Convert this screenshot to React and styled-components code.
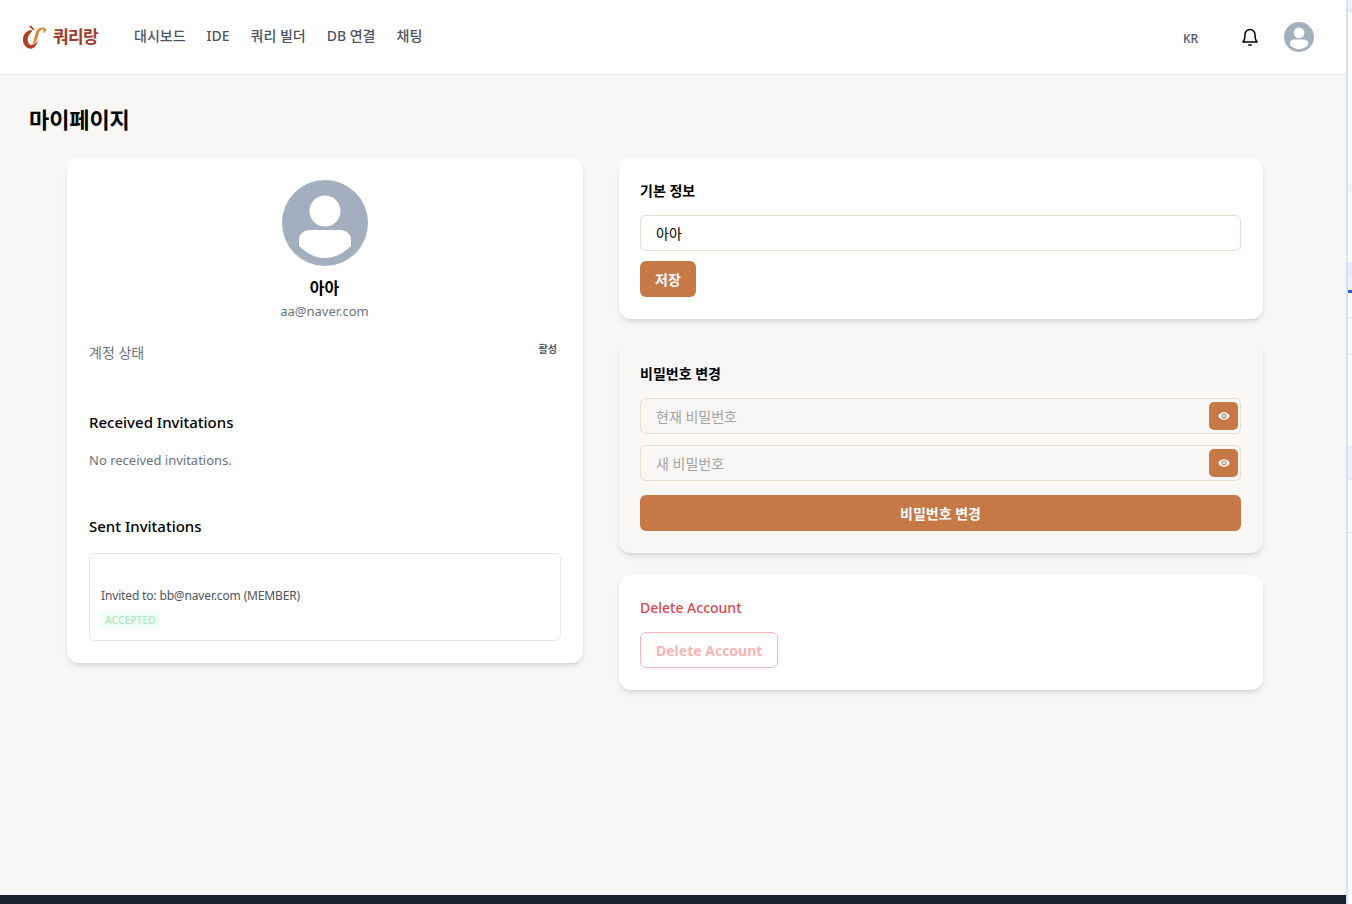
import React from "react";
import styled, { createGlobalStyle } from "styled-components";

const Global = createGlobalStyle`
  html, body { margin: 0; padding: 0; height: 100%; overflow: hidden; background: #fff; }
  body { font-family: "Noto Sans", "Noto Sans CJK KR", sans-serif; }
  * { box-sizing: border-box; }
`;

const Shell = styled.div`display: flex; width: 1352px; height: 904px; overflow: hidden;`;
const Page = styled.div`width: 1346px; height: 904px; display: flex; flex-direction: column; background: #f9f7f5;`;
const Strip = styled.div`width: 6px; height: 904px; flex: none; background: #fff; border-left: 2px solid #d5dff8; display: flex; flex-direction: column;`;
const StripCell = styled.div`flex: none; height: ${p => p.$h}px; background: ${p => p.$bg || "#fff"}; border-bottom: ${p => p.$line ? `1px solid ${p.$line}` : "none"};`;

const Header = styled.header`height: 75px; flex: none; background: #fff; border-bottom: 1px solid #e5e7eb; display: flex; align-items: center; padding: 0 32px 0 22px;`;
const Brand = styled.div`display: flex; align-items: center; gap: 4px; width: 112px; flex: none;`;
const BrandName = styled.span`font-size: 17px; font-weight: 700; letter-spacing: -0.6px; color: #a33a2a; line-height: 24px;`;
const Nav = styled.nav`display: flex; gap: 21px; align-items: center; margin-top: -3px;`;
const NavLink = styled.a`font-size: 14px; font-weight: 500; color: #4b5563; line-height: 20px; white-space: nowrap;`;
const HeaderRight = styled.div`margin-left: auto; display: flex; align-items: center;`;
const Lang = styled.span`font-size: 12px; font-weight: 500; color: #4b5563; width: 57px; margin-top: 2px;`;
const BellWrap = styled.span`display: flex; width: 44px;`;

const Main = styled.main`flex: 1; min-height: 0; padding: 29px 83px 0 29px;`;
const Title = styled.h1`margin: 0 0 24px; font-size: 22px; font-weight: 700; color: #000; line-height: 30px; letter-spacing: -0.1px;`;
const Grid = styled.div`display: grid; grid-template-columns: 516px 644px; gap: 36px; margin-left: 38px; align-items: start;`;
const Column = styled.div`display: flex; flex-direction: column; gap: 22px;`;
const Card = styled.section`
  background: ${p => p.$tint ? "#f9f7f5" : "#fff"};
  border-radius: 12px;
  box-shadow: 0 4px 6px -1px rgba(0,0,0,.1), 0 2px 4px -2px rgba(0,0,0,.1);
  padding: 22px 22px 22px 21px;
`;
const ProfileTop = styled.div`display: flex; flex-direction: column; align-items: center;`;
const Name = styled.div`margin-top: 10px; font-size: 16px; font-weight: 700; color: #000; line-height: 24px;`;
const Email = styled.div`font-size: 13px; line-height: 20px; color: #6b7280; margin-top: 1px;`;
const StatusRow = styled.div`display: flex; justify-content: space-between; align-items: flex-start; margin-top: 22px; padding: 0 4px 0 1px;`;
const StatusLabel = styled.span`font-size: 14px; line-height: 20px; color: #6b7280;`;
const StatusValue = styled.span`font-size: 10px; font-weight: 700; line-height: 16px; color: #4b5563; margin-top: -2px;`;
const InviteTitle = styled.h3`margin: ${p => p.$mt}px 0 0 1px; font-size: 15px; font-weight: 500; color: #000; line-height: 22px;`;
const Empty = styled.p`margin: 17px 0 0 1px; font-size: 13px; line-height: 20px; color: #6b7280;`;
const InviteBox = styled.div`margin: 16px 0 0 1px; height: 88px; border: 1px solid #e2e8f0; border-radius: 6px; padding: 33px 11px 0;`;
const InviteText = styled.div`font-size: 12px; line-height: 18px; color: #4b5563; letter-spacing: -0.15px;`;
const Badge = styled.span`display: inline-block; margin-top: 7px; padding: 0 4px; height: 16px; background: #f0fdf4; color: #b1e6c2; font-size: 10.5px; font-weight: 500; line-height: 16px; letter-spacing: -0.1px; vertical-align: top;`;

const SectionTitle = styled.h2`margin: 0 0 14px; font-size: 14px; font-weight: 700; color: #000; line-height: 21px;`;
const Field = styled.div`position: relative; height: 36px; margin-top: ${p => p.$mt || 0}px;`;
const Input = styled.input`
  width: 100%; height: 100%; border: 1px solid #e8dccf; border-radius: 6px; background: ${p => p.$tint ? "#f9f7f5" : "#fff"};
  padding: 0 40px 0 15px; font: 400 14px "Noto Sans", "Noto Sans CJK KR", sans-serif; color: #000; outline: none;
  &::placeholder { color: #a3a3a3; opacity: 1; }
`;
const EyeButton = styled.button`position: absolute; right: 3px; top: 4px; width: 29px; height: 28px; border: none; border-radius: 5px; background: #c67847; display: flex; align-items: center; justify-content: center; padding: 0;`;
const Primary = styled.button`
  display: block; height: 36px; border: none; border-radius: 6px; background: #c67847; color: #fff;
  font: 700 14px "Noto Sans", "Noto Sans CJK KR", sans-serif; padding: 0 15px; margin-top: ${p => p.$mt}px;
  width: ${p => p.$full ? "100%" : "auto"};
`;
const DangerTitle = styled.h2`margin: 0 0 14px; font-size: 14px; font-weight: 500; color: #d9484d; line-height: 21px; padding-top: 0;`;
const DangerButton = styled.button`height: 36px; border: 1px solid #f8b4b4; border-radius: 6px; background: #fff; color: #f8b4b4; font: 700 14px "Noto Sans", "Noto Sans CJK KR", sans-serif; padding: 0 15px;`;
const Footer = styled.footer`height: 9px; flex: none; background: #1a202c;`;

const Eye = () => (
  <svg width="12" height="12" viewBox="0 0 24 24" fill="#fff" aria-hidden="true">
    <path fillRule="evenodd" d="M12 4.5C6.5 4.5 2.2 8 .5 12c1.700 4 6 7.500 11.500 7.500S21.800 16 23.500 12C21.800 8 17.500 4.500 12 4.500zM12 17a5 5 0 1 1 0-10 5 5 0 0 1 0 10z" />
    <circle cx="12" cy="12" r="2.800" />
  </svg>
);

const AvatarIcon = ({ size }) => (
  <svg width={size} height={size} viewBox="0 0 86 86" aria-hidden="true">
    <circle cx="43" cy="43" r="43" fill="#a3aebf" />
    <circle cx="43" cy="31" r="15.500" fill="#fff" />
    <path d="M17 66v-6c0-6 5-10 11-10h30c6 0 11 4 11 10v6c-7 7-16 12-26 12s-19-5-26-12z" fill="#fff" />
  </svg>
);

const Logo = () => (
  <svg width="27" height="25" viewBox="0 0 27 25" aria-hidden="true">
    <path d="M9 5C3 6 .5 11 1 16c.5 5 5 8.500 9 7.500 3-.8 5-4 6-8-2 3-4.500 5-7 4.500C5.500 19 5 14 6.500 11 7.500 9 9 7 10.500 6z" fill="#b23f28" />
    <path d="M15 5c-2 3-2.500 7-3.500 11-.4 1.500-1 3-2 4 3-.5 5-3.500 6-7 .7-2.500 1-5 2.500-7 1.200-1.500 3-2 3.500-1 .3.700 0 2-.8 3.500 2.500-1 4-3 3.500-4.500C23.500 2 17.500 1.500 15 5z" fill="#d98a3a" />
    <path d="M7 1.500 11 5l1.500-.5L9 .5z" fill="#a33a2a" />
  </svg>
);

const Bell = () => (
  <svg width="20" height="20" viewBox="0 0 24 24" fill="none" stroke="#000" strokeWidth="1.800" strokeLinecap="round" strokeLinejoin="round" aria-hidden="true">
    <path d="M6 9a6 6 0 0 1 12 0c0 5.500 1 7.500 2.500 9h-17C5 16.500 6 14.500 6 9z" />
    <path d="M10.500 21.500h3" />
  </svg>
);

export default function App() {
  return (
    <Shell>
      <Global />
      <Page>
        <Header>
          <Brand>
            <Logo />
            <BrandName>쿼리랑</BrandName>
          </Brand>
          <Nav>
            <NavLink>대시보드</NavLink>
            <NavLink>IDE</NavLink>
            <NavLink>쿼리 빌더</NavLink>
            <NavLink>DB 연결</NavLink>
            <NavLink>채팅</NavLink>
          </Nav>
          <HeaderRight>
            <Lang>KR</Lang>
            <BellWrap><Bell /></BellWrap>
            <AvatarIcon size={30} />
          </HeaderRight>
        </Header>
        <Main>
          <Title>마이페이지</Title>
          <Grid>
            <Card>
              <ProfileTop>
                <AvatarIcon size={86} />
                <Name>아아</Name>
                <Email>aa@naver.com</Email>
              </ProfileTop>
              <StatusRow>
                <StatusLabel>계정 상태</StatusLabel>
                <StatusValue>활성</StatusValue>
              </StatusRow>
              <InviteTitle $mt={48}>Received Invitations</InviteTitle>
              <Empty>No received invitations.</Empty>
              <InviteTitle $mt={45}>Sent Invitations</InviteTitle>
              <InviteBox>
                <InviteText>Invited to: bb@naver.com (MEMBER)</InviteText>
                <Badge>ACCEPTED</Badge>
              </InviteBox>
            </Card>
            <Column>
              <Card>
                <SectionTitle>기본 정보</SectionTitle>
                <Field><Input defaultValue="아아" /></Field>
                <Primary $mt={10}>저장</Primary>
              </Card>
              <Card $tint>
                <SectionTitle>비밀번호 변경</SectionTitle>
                <Field>
                  <Input $tint placeholder="현재 비밀번호" />
                  <EyeButton><Eye /></EyeButton>
                </Field>
                <Field $mt={11}>
                  <Input $tint placeholder="새 비밀번호" />
                  <EyeButton><Eye /></EyeButton>
                </Field>
                <Primary $mt={14} $full>비밀번호 변경</Primary>
              </Card>
              <Card>
                <DangerTitle>Delete Account</DangerTitle>
                <DangerButton>Delete Account</DangerButton>
              </Card>
            </Column>
          </Grid>
        </Main>
        <Footer />
      </Page>
      <Strip>
        <StripCell $h={12} $bg="#eef2fc" $line="#dde5f8" />
        <StripCell $h={172} />
        <StripCell $h={8} $bg="#f3f3f3" />
        <StripCell $h={70} />
        <StripCell $h={14} $bg="#e5ebfa" />
        <StripCell $h={14} $bg="#eef2fc" />
        <StripCell $h={3} $bg="#2f5fd8" />
        <StripCell $h={25} $line="#dde5f8" />
        <StripCell $h={37} $line="#dde5f8" />
        <StripCell $h={92} $line="#dde5f8" />
        <StripCell $h={33} $bg="#eef2fc" $line="#dde5f8" />
        <StripCell $h={53} $line="#dde5f8" />
      </Strip>
    </Shell>
  );
}
